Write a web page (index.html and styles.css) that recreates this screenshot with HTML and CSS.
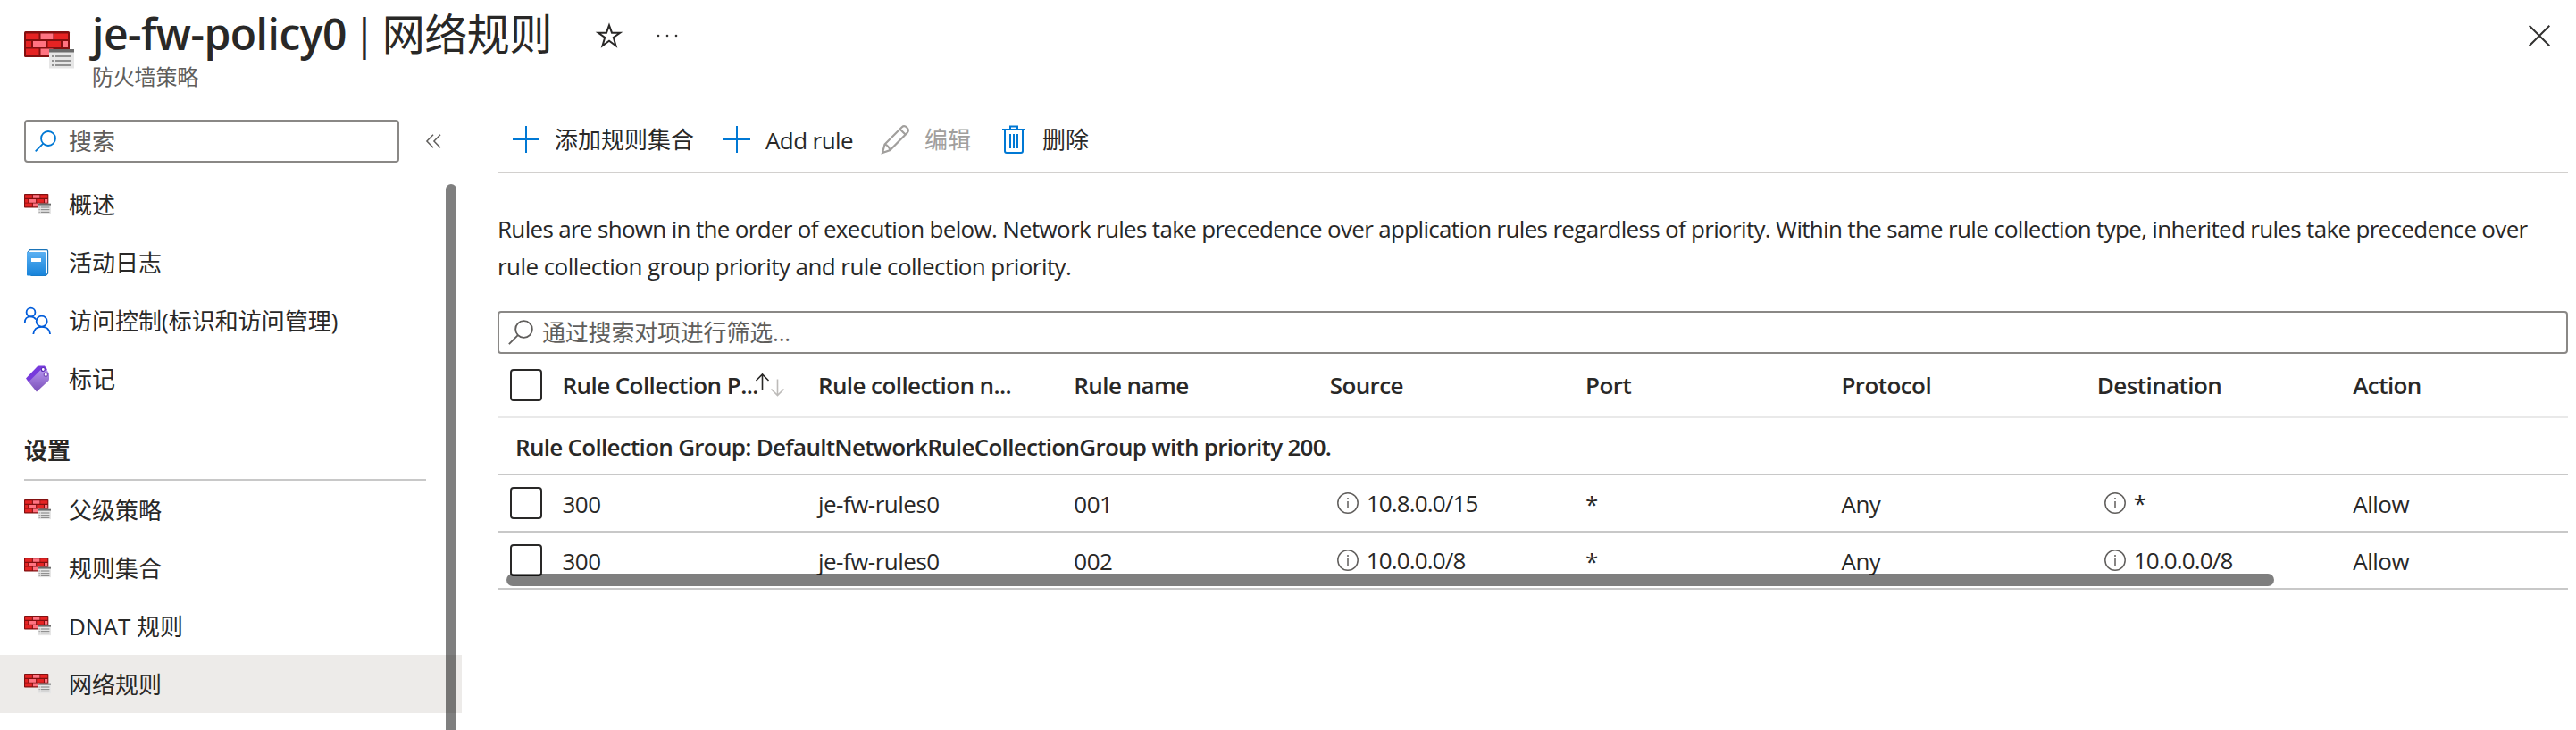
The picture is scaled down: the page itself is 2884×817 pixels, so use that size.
FILE: index.html
```html
<!DOCTYPE html>
<html lang="zh-CN">
<head>
<meta charset="utf-8">
<title>je-fw-policy0 | 网络规则</title>
<link rel="stylesheet" href="styles.css">
</head>
<body>
<svg class="defs" width="0" height="0" aria-hidden="true">
  <defs>
    <linearGradient id="bookFill" x1="0" y1="0" x2="0" y2="1"><stop offset="0" stop-color="#5ab0f2"/><stop offset="1" stop-color="#1683da"/></linearGradient>
    <linearGradient id="tagFill" x1="0" y1="0" x2="0" y2="1"><stop offset="0" stop-color="#b796f0"/><stop offset="1" stop-color="#7a4fb8"/></linearGradient>
    <symbol id="firewall" viewBox="0 0 56 42">
      <rect x="0" y="0" width="51" height="29" rx="1.5" fill="#821010"/>
      <path fill="#e62323" d="M2 2.500h14.500v6.500H2zM34 2.500h15v6.500H34zM2 11h6v7H2zM26.500 11h14.500v7H26.500zM2 19.500h14.500v7H2z"/>
      <path fill="#ff7381" d="M18.500 2.500h14v6.500h-14zM10 11h14.500v7H10zM43 11h6v7h-6zM18.500 19.500h14v7h-14z"/>
      <rect x="28" y="20" width="28" height="21.500" fill="#e6e6e6"/>
      <rect x="28" y="20" width="28" height="3.500" fill="#6b6b6b"/>
      <path stroke="#767676" stroke-width="1.700" d="M31 28h2M35 28h18M31 33h2M35 33h18M31 38h2M35 38h18"/>
    </symbol>
    <symbol id="magnifier" viewBox="0 0 24 24">
      <circle cx="15" cy="9" r="8"/><path d="M9.300 14.700 .7 23.300"/>
    </symbol>
    <symbol id="info" viewBox="0 0 24 24">
      <circle cx="12" cy="12" r="11.200"/><path d="M12 10v8M12 6v2"/>
    </symbol>
  </defs>
</svg>

<header class="blade-header">
  <svg class="blade-icon"><use href="#firewall"/></svg>
  <div class="titles">
    <h1><span class="name">je-fw-policy0 </span><span class="bar">| </span><span class="section">网络规则</span></h1>
    <p class="subtitle">防火墙策略</p>
  </div>
  <svg class="star" viewBox="0 0 28 28"><path d="M14 2.300 17 10.700h9.200L18.800 16l2.700 9.200L14 19.700 6.500 25.200 9.200 16 1.800 10.700H11z"/></svg>
  <svg class="more" viewBox="0 0 24 4"><circle cx="2" cy="2" r="1.300"/><circle cx="12" cy="2" r="1.300"/><circle cx="22" cy="2" r="1.300"/></svg>
  <svg class="close" viewBox="0 0 24 24"><path d="M.7.7l22.600 22.600M23.300.7.7 23.300"/></svg>
</header>

<div class="body">
  <aside class="sidebar">
    <div class="side-top">
      <div class="side-search"><svg class="mag"><use href="#magnifier"/></svg><span>搜索</span></div>
      <svg class="collapse" viewBox="0 0 17 16"><path d="M8 .7.900 8 8 15.300M16 .7 8.900 8l7.100 7.300"/></svg>
    </div>
    <nav class="menu">
      <a class="item"><svg class="fw"><use href="#firewall"/></svg><span>概述</span></a>
      <a class="item"><svg class="ico" viewBox="0 0 30 30"><path fill="#fff" stroke="#1b74b8" stroke-width="1.200" d="M4 3.500 6.500.7h18.800q1.300 0 1.300 1.300v25l-2.300 2.300H8z"/><rect x="3" y="3" width="21" height="26.500" rx="1" fill="url(#bookFill)"/><rect x="8" y="10" width="11" height="4" fill="#fff"/></svg><span>活动日志</span></a>
      <a class="item"><svg class="ico people" viewBox="0 0 30 30"><circle cx="7.500" cy="5.500" r="4.900"/><path d="M.8 17q0-6.700 6.700-6.700 3.500 0 5.800 3.200"/><circle cx="19.700" cy="15.700" r="6"/><path d="M10.300 30q.8-8.200 9.400-8.200t9.400 8.200"/></svg><span>访问控制(标识和访问管理)</span></a>
      <a class="item"><svg class="ico" viewBox="0 0 30 30"><path fill="#773adc" d="M2 14.500 14.500 1.500Q15.500.5 17 .5h6l3 4L6 20z"/><path fill="url(#tagFill)" d="M5 18.500 18.500 5q1-1 2.500-1h4l3 5v6q0 1.500-1 2.500L14 29.500z"/><circle cx="21.300" cy="4.500" r="2" fill="#fff" stroke="#5b2ab5" stroke-width="1.200"/><circle cx="24.300" cy="10.200" r="2.100" fill="#fff" stroke="#7a4fb8" stroke-width="1.200"/></svg><span>标记</span></a>
      <h2>设置</h2>
      <a class="item"><svg class="fw"><use href="#firewall"/></svg><span>父级策略</span></a>
      <a class="item"><svg class="fw"><use href="#firewall"/></svg><span>规则集合</span></a>
      <a class="item"><svg class="fw"><use href="#firewall"/></svg><span>DNAT 规则</span></a>
      <a class="item selected"><svg class="fw"><use href="#firewall"/></svg><span>网络规则</span></a>
      <div class="vscroll"></div>
    </nav>
  </aside>

  <main class="content">
    <div class="toolbar">
      <svg class="plus" viewBox="0 0 30 30"><path d="M15 0v30M0 15h30"/></svg><span class="cmd c1">添加规则集合</span>
      <svg class="plus" viewBox="0 0 30 30"><path d="M15 0v30M0 15h30"/></svg><span class="cmd c2">Add rule</span>
      <svg class="pencil" viewBox="0 0 32 32"><path d="M1 31 3.500 21.500 22.800 2.200q2.500-2.400 5.500.5 2.900 2.900.5 5.800L9.500 28zM3.500 21.500q4.500 1.500 6 6.500M20.500 4.500l6.300 6.300"/></svg><span class="cmd c3">编辑</span>
      <svg class="trash" viewBox="0 0 26 32"><path d="M0 5h26M9 5V1.500h8V5M3 5v24q0 2 2 2h16q2 0 2-2V5M9 10v16M13 10v16M17 10v16"/></svg><span class="cmd">删除</span>
    </div>
    <p class="note"><span class="l1">Rules are shown in the order of execution below. Network rules take precedence over application rules regardless of priority. Within the same rule collection type, inherited rules take precedence over</span><br><span class="l2">rule collection group priority and rule collection priority.</span></p>
    <div class="filter"><svg class="mag"><use href="#magnifier"/></svg><span>通过搜索对项进行筛选...</span></div>
    <div class="grid">
      <div class="row head">
        <i class="check"></i>
        <span class="sorted">Rule Collection P...<svg class="sort" viewBox="0 0 32 26"><path d="M7.500 19V1M.5 8l7-7 7 7"/><path class="down" d="M24.500 6.500v18M17.500 17.500l7 7 7-7"/></svg></span>
        <span>Rule collection n...</span><span>Rule name</span><span>Source</span><span>Port</span><span>Protocol</span><span>Destination</span><span>Action</span>
      </div>
      <div class="row group">Rule Collection Group: DefaultNetworkRuleCollectionGroup with priority 200.</div>
      <div class="row">
        <i class="check"></i>
        <span>300</span><span>je-fw-rules0</span><span>001</span><span class="addr"><svg class="info"><use href="#info"/></svg>10.8.0.0/15</span><span>*</span><span>Any</span><span class="addr"><svg class="info"><use href="#info"/></svg>*</span><span>Allow</span>
      </div>
      <div class="row">
        <i class="check"></i>
        <span>300</span><span>je-fw-rules0</span><span>002</span><span class="addr"><svg class="info"><use href="#info"/></svg>10.0.0.0/8</span><span>*</span><span>Any</span><span class="addr"><svg class="info"><use href="#info"/></svg>10.0.0.0/8</span><span>Allow</span>
      </div>
      <div class="hscroll"></div>
    </div>
  </main>
</div>
</body>
</html>
```
FILE: styles.css
```css
* { box-sizing: border-box; }
body {
  margin: 0;
  width: 2884px;
  height: 817px;
  overflow: hidden;
  background: #fff;
  color: #292827;
  font: 26px/36px "Open Sans", "Noto Sans CJK SC", sans-serif;
}
h1, h2, p { margin: 0; }
svg { flex: none; display: block; overflow: visible; fill: none; }
.defs { position: absolute; }

.blade-header { display: flex; align-items: flex-start; height: 134px; padding-left: 27px; }
.blade-icon { width: 56px; height: 42px; margin-top: 35px; }
.titles { width: 585px; padding-left: 20px; white-space: nowrap; }
h1 { font-size: 48px; line-height: 64px; height: 68px; padding-top: 6px; font-weight: 600; }
.name { letter-spacing: -.5px; }
.bar, .section { font-weight: 400; }
.bar { margin-left: -5px; letter-spacing: -3px; }
.section { letter-spacing: -.4px; }
.subtitle { font-size: 24px; line-height: 36px; color: #605e5c; letter-spacing: -.2px; }
.star { width: 28px; height: 28px; margin-top: 26px; stroke: #292827; stroke-width: 2; }
.more { width: 24px; height: 4px; margin: 38px 0 0 39px; fill: #323130; }
.close { width: 24px; height: 24px; margin: 28px 29px 0 auto; stroke: #323130; stroke-width: 2; }

.body { display: flex; height: 683px; }
.sidebar { width: 557px; flex: none; }
.side-top { display: flex; align-items: center; height: 48px; padding-left: 27px; }
.side-search, .filter { display: flex; align-items: center; height: 48px; border: 2px solid #8a8886; border-radius: 4px; color: #605e5c; }
.side-search { width: 420px; padding-left: 10px; gap: 14px; }
.side-search .mag { width: 24px; height: 24px; stroke: #0078d4; stroke-width: 1.8; }
.collapse { width: 17px; height: 16px; margin-left: 30px; stroke: #605e5c; stroke-width: 1.5; }

.menu { position: relative; width: 517px; height: 635px; padding-top: 14px; overflow: hidden; }
.item { display: flex; align-items: center; height: 65px; padding-left: 27px; white-space: nowrap; }
.item.selected { background: #edebe9; }
.fw { width: 30px; height: 22.5px; margin-right: 20px; }
.ico { width: 30px; height: 30px; margin-right: 20px; }
.people { stroke: #015cda; stroke-width: 1.8; }
h2 { width: 450px; height: 82px; margin-left: 27px; padding-top: 30px; border-bottom: 2px solid #c8c8c8; font-size: 26px; line-height: 36px; font-weight: 700; }
.vscroll { position: absolute; left: 499px; top: 24px; width: 12px; height: 640px; border-radius: 6px; background: rgba(0, 0, 0, .5); }

.content { width: 2318px; flex: none; }
.toolbar { display: flex; align-items: center; height: 60px; padding: 0 0 14px 17px; border-bottom: 2px solid #d2d0ce; white-space: nowrap; }
.plus { width: 30px; height: 30px; margin-right: 17px; stroke: #0078d4; stroke-width: 2; }
.cmd.c1 { width: 189px; }
.cmd.c2 { width: 130px; padding-top: 2px; letter-spacing: -.6px; }
.cmd.c3 { width: 87px; color: #a19f9d; }
.pencil { width: 32px; height: 32px; margin-right: 16px; stroke: #a19f9d; stroke-width: 2.2; }
.trash { width: 26px; height: 32px; margin-right: 19px; stroke: #0078d4; stroke-width: 2; }
.note { height: 154px; padding-top: 41px; line-height: 42px; white-space: nowrap; }
.l1 { letter-spacing: -.68px; }
.l2 { letter-spacing: -.56px; }
.filter { padding-left: 10px; gap: 10px; letter-spacing: -.2px; }
.filter .mag { width: 28px; height: 28px; stroke: #605e5c; stroke-width: 1.6; }

.grid { position: relative; }
.row { display: grid; grid-template-columns: 58.5px repeat(8, 286.4px); align-items: center; height: 64px; width: 2318px; padding-left: 14px; border-bottom: 2px solid #c8c8c8; overflow: hidden; white-space: nowrap; letter-spacing: -.5px; }
.row > span { padding-top: 2px; }
.head { height: 72px; border-color: #e9e9e9; font-weight: 600; letter-spacing: -.58px; }
.head > span { padding-top: 0; }
.group { display: block; padding: 14px 0 0 20px; font-weight: 600; letter-spacing: -.71px; }
.check { width: 36px; height: 36px; border: 2px solid #292827; border-radius: 4px; }
.sorted { display: flex; align-items: center; }
.sort { width: 32px; height: 26px; margin-left: -3px; stroke: #292827; stroke-width: 1.6; }
.sort .down { stroke: #bdbbb9; }
.row > .addr { display: flex; align-items: center; gap: 9px; padding: 0 0 0 8px; letter-spacing: -.85px; }
.info { width: 24px; height: 24px; stroke: #605e5c; stroke-width: 1.5; }
.hscroll { position: absolute; left: 10px; top: 246px; width: 1979px; height: 14px; border-radius: 7px; background: rgba(0, 0, 0, .5); }
```
